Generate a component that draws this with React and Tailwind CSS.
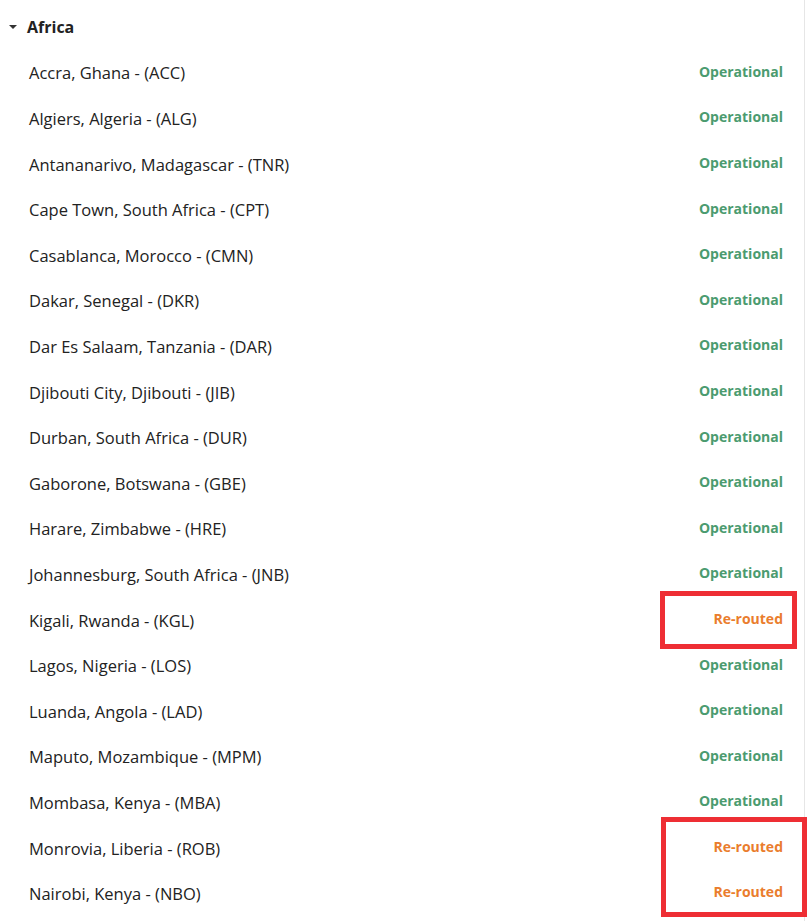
import React from 'react';

const airports = [
  { name: 'Accra, Ghana - (ACC)', status: 'Operational' },
  { name: 'Algiers, Algeria - (ALG)', status: 'Operational' },
  { name: 'Antananarivo, Madagascar - (TNR)', status: 'Operational' },
  { name: 'Cape Town, South Africa - (CPT)', status: 'Operational' },
  { name: 'Casablanca, Morocco - (CMN)', status: 'Operational' },
  { name: 'Dakar, Senegal - (DKR)', status: 'Operational' },
  { name: 'Dar Es Salaam, Tanzania - (DAR)', status: 'Operational' },
  { name: 'Djibouti City, Djibouti - (JIB)', status: 'Operational' },
  { name: 'Durban, South Africa - (DUR)', status: 'Operational' },
  { name: 'Gaborone, Botswana - (GBE)', status: 'Operational' },
  { name: 'Harare, Zimbabwe - (HRE)', status: 'Operational' },
  { name: 'Johannesburg, South Africa - (JNB)', status: 'Operational' },
  { name: 'Kigali, Rwanda - (KGL)', status: 'Re-routed' },
  { name: 'Lagos, Nigeria - (LOS)', status: 'Operational' },
  { name: 'Luanda, Angola - (LAD)', status: 'Operational' },
  { name: 'Maputo, Mozambique - (MPM)', status: 'Operational' },
  { name: 'Mombasa, Kenya - (MBA)', status: 'Operational' },
  { name: 'Monrovia, Liberia - (ROB)', status: 'Re-routed' },
  { name: 'Nairobi, Kenya - (NBO)', status: 'Re-routed' },
];

const App = () => {
  return (
    <div className="relative h-[921px] w-[807px] overflow-hidden bg-white font-['Open_Sans',sans-serif] text-[#222]">
      <div className="h-full w-[805px] border-r border-[#e6e6e6]">
        <div className="flex h-[50px] items-center pt-[4px] pl-[8px]">
          <svg width="10" height="6" viewBox="0 0 10 6" className="mr-[9px]">
            <path d="M1 1 L5 5 L9 1 Z" fill="#333" />
          </svg>
          <span className="text-[16px] font-bold text-[#222]">Africa</span>
        </div>
        {airports.map((a) => (
          <div key={a.name} className="flex h-[45.6px] items-center justify-between pl-[29px] pr-[21px]">
            <span className="mt-[2px] text-[16.5px] text-[#222]">{a.name}</span>
            <span
              className={
                a.status === 'Operational'
                  ? 'mb-[3px] text-[14px] font-bold text-[#4b9b6f]'
                  : 'mb-[3px] text-[14px] font-bold text-[#ea7d2d]'
              }
            >
              {a.status}
            </span>
          </div>
        ))}
      </div>

      {/* annotation boxes */}
      <div className="absolute left-[660px] top-[591px] h-[58px] w-[137px] border-[5px] border-[#ee2e34]" />
      <div className="absolute left-[661px] top-[817px] h-[100px] w-[146px] border-[5px] border-[#ee2e34]" />
    </div>
  );
};

export default App;
